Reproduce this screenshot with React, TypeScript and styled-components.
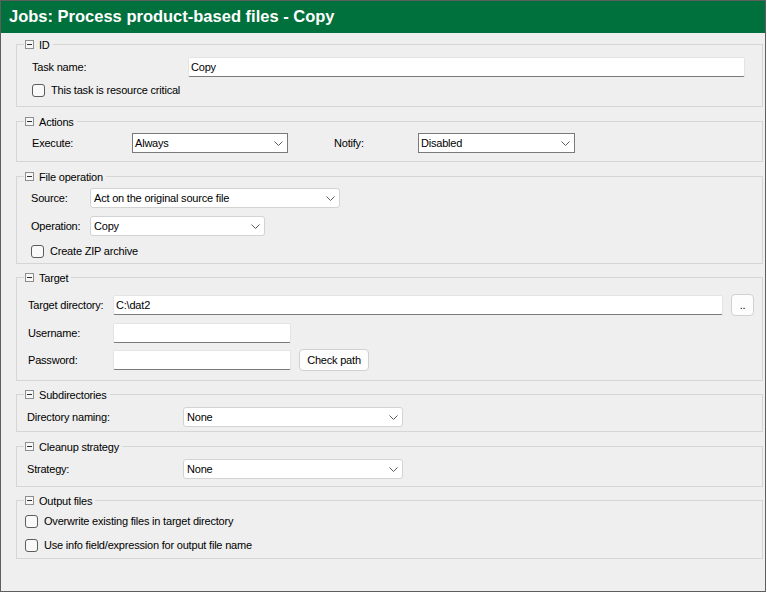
import React from "react";
import styled, { createGlobalStyle } from "styled-components";

const Global = createGlobalStyle`
  html, body { margin: 0; padding: 0; background: #ffffff; }
  body { font-family: "Liberation Sans", Arial, sans-serif; }
`;

const Window = styled.div`
  width: 766px;
  height: 592px;
  box-sizing: border-box;
  border: 1px solid #5e5e5e;
  background: #efefef;
  display: flex;
  flex-direction: column;
  font-family: "Liberation Sans", Arial, sans-serif;
  font-size: 11px;
  letter-spacing: -0.2px;
  color: #000;
`;

const Header = styled.div`
  flex: none;
  height: 32px;
  box-sizing: border-box;
  padding: 0 0 1px 8px;
  background: #00703c;
  color: #ffffff;
  font-weight: bold;
  font-size: 16.5px;
  letter-spacing: 0;
  display: flex;
  align-items: center;
`;

const Body = styled.div`
  display: flex;
  flex-direction: column;
  padding: 4px 2px 0 15px;
`;

const Group = styled.section<{ $mt: number }>`
  margin-top: ${(p) => p.$mt}px;
  border: 1px solid #d6d6d6;
  display: flex;
  flex-direction: column;
`;

const Legend = styled.div`
  align-self: flex-start;
  height: 15px;
  margin: -8px 0 0 7px;
  padding: 0 3px 0 1px;
  background: #efefef;
  display: flex;
  align-items: center;
  gap: 5px;
  white-space: nowrap;
`;

const Toggle = styled.span`
  width: 9px;
  height: 9px;
  box-sizing: border-box;
  border: 1px solid #8e8e8e;
  background: #f7f7f7;
  display: flex;
  align-items: center;
  justify-content: center;
  &::after {
    content: "";
    width: 5px;
    height: 1px;
    background: #303030;
  }
`;

const Content = styled.div<{ $pt: number; $pb: number; $pl: number }>`
  display: flex;
  flex-direction: column;
  padding: ${(p) => p.$pt}px 0 ${(p) => p.$pb}px ${(p) => p.$pl}px;
`;

const Row = styled.div<{ $h?: number; $mt?: number }>`
  display: flex;
  align-items: center;
  height: ${(p) => p.$h ?? 20}px;
  margin-top: ${(p) => p.$mt ?? 0}px;
`;

const Label = styled.span<{ $w: number; $ml?: number }>`
  flex: none;
  width: ${(p) => p.$w}px;
  margin-left: ${(p) => p.$ml ?? 0}px;
  white-space: nowrap;
`;

const TextBox = styled.input<{ $w: number }>`
  flex: none;
  width: ${(p) => p.$w}px;
  height: 20px;
  box-sizing: border-box;
  margin: 0;
  padding: 0 0 0 2px;
  background: #ffffff;
  border: 1px solid #e4e4e4;
  border-bottom-color: #7a7a7a;
  border-radius: 2px;
  font: inherit;
  letter-spacing: inherit;
  color: #000;
  outline: none;
`;

const Select = styled.div<{ $w: number; $classic?: boolean }>`
  flex: none;
  width: ${(p) => p.$w}px;
  height: 20px;
  box-sizing: border-box;
  padding: 0 4px 0 ${(p) => (p.$classic ? 2 : 3)}px;
  background: #ffffff;
  border: 1px solid ${(p) => (p.$classic ? "#7a7a7a" : "#d3d3d3")};
  border-radius: ${(p) => (p.$classic ? 0 : 3)}px;
  display: flex;
  align-items: center;
  justify-content: space-between;
  white-space: nowrap;
`;

const Chevron = styled.svg`
  flex: none;
  width: 9px;
  height: 5px;
`;

const Button = styled.button<{ $w: number; $ml: number }>`
  flex: none;
  width: ${(p) => p.$w}px;
  height: 22px;
  margin: 0 0 0 ${(p) => p.$ml}px;
  padding: 0;
  box-sizing: border-box;
  background: #fdfdfd;
  border: 1px solid #d0d0d0;
  border-radius: 4px;
  font: inherit;
  letter-spacing: inherit;
  color: #000;
`;

const Check = styled.label`
  display: flex;
  align-items: center;
  gap: 6px;
  white-space: nowrap;
`;

const CheckBox = styled.span`
  flex: none;
  width: 13px;
  height: 13px;
  box-sizing: border-box;
  border: 1px solid #5c5c5c;
  border-radius: 3px;
  background: #f9f9f9;
`;

const Arrow = () => (
  <Chevron viewBox="0 0 9 5">
    <polyline points="0.5,0.5 4.5,4.5 8.5,0.5" fill="none" stroke="#5a5a5a" strokeWidth="1" />
  </Chevron>
);

const Dropdown = ({ w, value, classic }: { w: number; value: string; classic?: boolean }) => (
  <Select $w={w} $classic={classic}>
    <span>{value}</span>
    <Arrow />
  </Select>
);

const Title = ({ children }: { children: React.ReactNode }) => (
  <Legend>
    <Toggle />
    <span>{children}</span>
  </Legend>
);

const Option = ({ children }: { children: React.ReactNode }) => (
  <Check>
    <CheckBox />
    <span>{children}</span>
  </Check>
);

export default function App() {
  return (
    <>
      <Global />
      <Window>
        <Header>Jobs: Process product-based files - Copy</Header>
        <Body>
          <Group $mt={7}>
            <Title>ID</Title>
            <Content $pt={5} $pb={6} $pl={15}>
              <Row>
                <Label $w={156}>Task name:</Label>
                <TextBox $w={557} defaultValue="Copy" readOnly />
              </Row>
              <Row $mt={3}>
                <Option>This task is resource critical</Option>
              </Row>
            </Content>
          </Group>

          <Group $mt={14}>
            <Title>Actions</Title>
            <Content $pt={4} $pb={8} $pl={15}>
              <Row>
                <Label $w={100}>Execute:</Label>
                <Dropdown w={156} value="Always" classic />
                <Label $w={84} $ml={46}>Notify:</Label>
                <Dropdown w={157} value="Disabled" classic />
              </Row>
            </Content>
          </Group>

          <Group $mt={14}>
            <Title>File operation</Title>
            <Content $pt={4} $pb={2} $pl={14}>
              <Row>
                <Label $w={59}>Source:</Label>
                <Dropdown w={250} value="Act on the original source file" />
              </Row>
              <Row $mt={8}>
                <Label $w={59}>Operation:</Label>
                <Dropdown w={175} value="Copy" />
              </Row>
              <Row $mt={5}>
                <Option>Create ZIP archive</Option>
              </Row>
            </Content>
          </Group>

          <Group $mt={13}>
            <Title>Target</Title>
            <Content $pt={9} $pb={9} $pl={11}>
              <Row $h={22}>
                <Label $w={85}>Target directory:</Label>
                <TextBox $w={610} defaultValue="C:\dat2" readOnly />
                <Button $w={23} $ml={8}>..</Button>
              </Row>
              <Row $mt={7}>
                <Label $w={85}>Username:</Label>
                <TextBox $w={178} defaultValue="" readOnly />
              </Row>
              <Row $h={22} $mt={6}>
                <Label $w={85}>Password:</Label>
                <TextBox $w={178} defaultValue="" readOnly />
                <Button $w={70} $ml={8}>Check path</Button>
              </Row>
            </Content>
          </Group>

          <Group $mt={13}>
            <Title>Subdirectories</Title>
            <Content $pt={5} $pb={4} $pl={10}>
              <Row>
                <Label $w={156}>Directory naming:</Label>
                <Dropdown w={220} value="None" />
              </Row>
            </Content>
          </Group>

          <Group $mt={14}>
            <Title>Cleanup strategy</Title>
            <Content $pt={5} $pb={7} $pl={10}>
              <Row>
                <Label $w={156}>Strategy:</Label>
                <Dropdown w={220} value="None" />
              </Row>
            </Content>
          </Group>

          <Group $mt={13}>
            <Title>Output files</Title>
            <Content $pt={3} $pb={3} $pl={8}>
              <Row>
                <Option>Overwrite existing files in target directory</Option>
              </Row>
              <Row $mt={4}>
                <Option>Use info field/expression for output file name</Option>
              </Row>
            </Content>
          </Group>
        </Body>
      </Window>
    </>
  );
}
